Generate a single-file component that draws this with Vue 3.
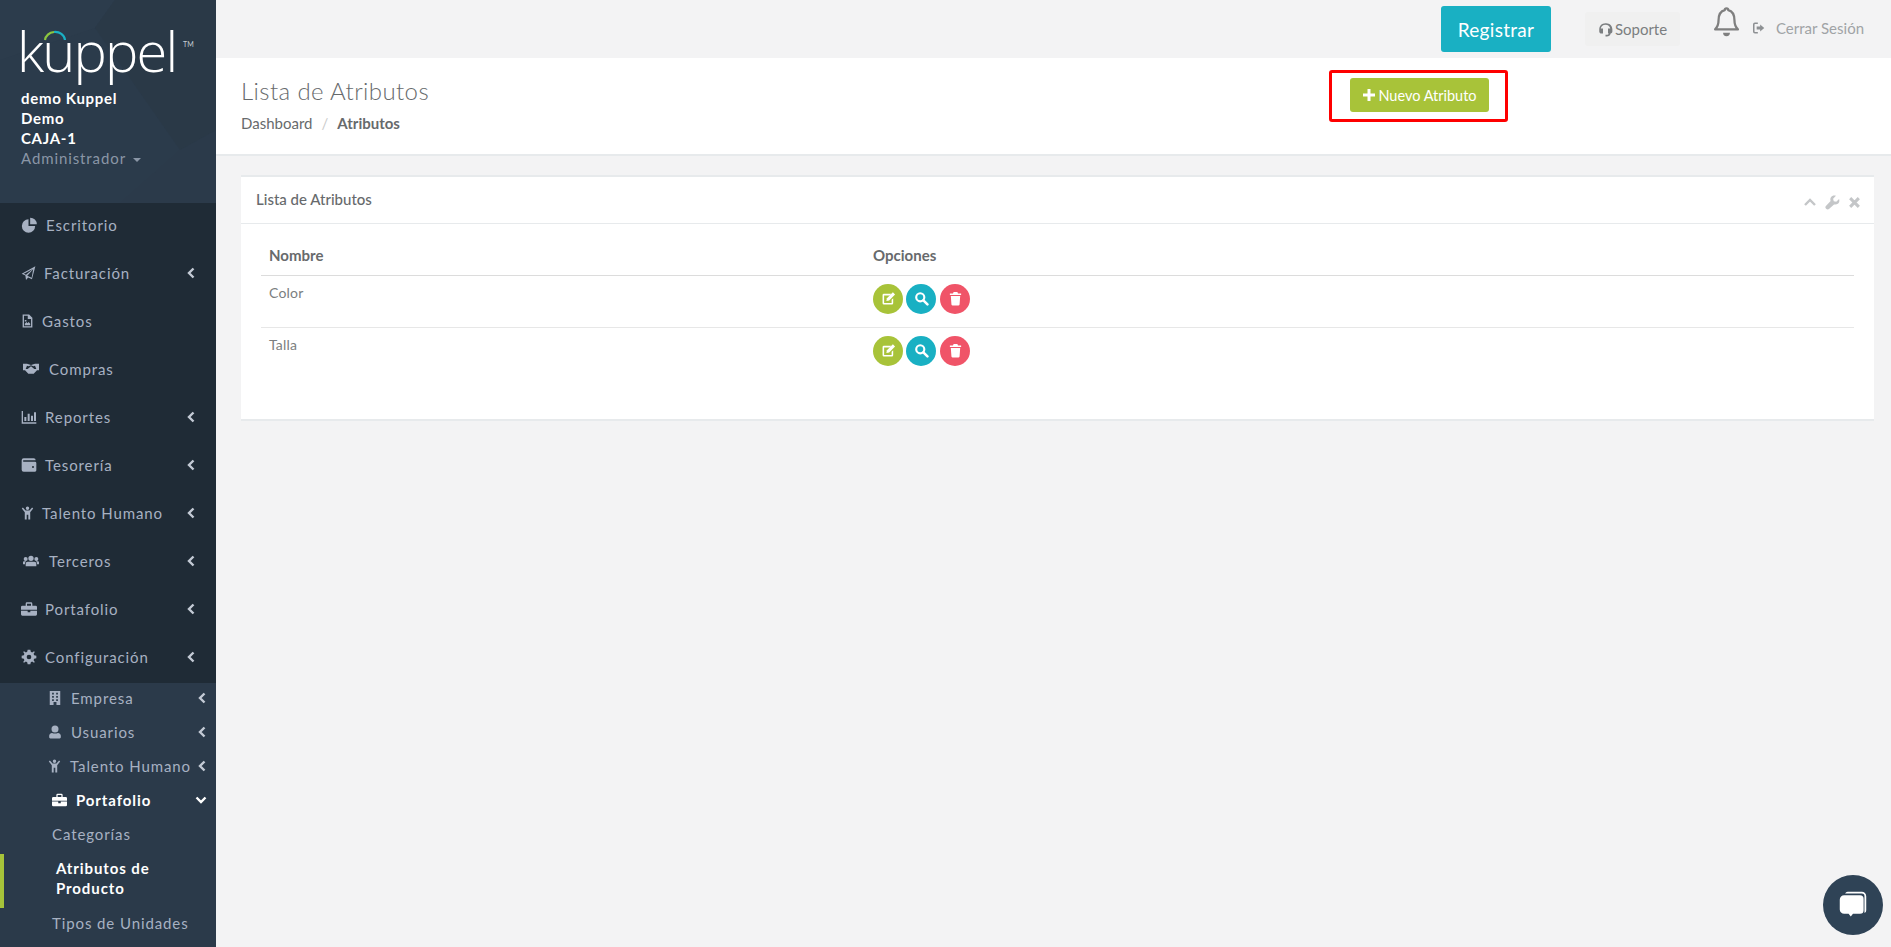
<template>
  <div class="app-shell">
    <aside class="sidebar">
      <div class="profile">
        <svg class="profile-bg" viewBox="0 0 216 203" preserveAspectRatio="none">
          <polygon points="0,0 115,0 95,28 60,75 0,60" fill="#2c3c4c" />
          <polygon points="115,0 216,0 216,130 180,150 95,28" fill="#2a3947" />
          <polygon points="0,60 95,28 180,150 120,203 0,203" fill="#2b3b4b" />
        </svg>
        <div class="logo">
          <svg class="logo-arc" viewBox="0 0 24 12">
            <path d="M2 10A10 9 0 0 1 11 2" fill="none" stroke="#8cc63f" stroke-width="2.2" />
            <path d="M11 2A10 9 0 0 1 22 10" fill="none" stroke="#1ab0c4" stroke-width="2.2" />
          </svg>
          <span class="logo-word">kuppel</span>
          <span class="logo-tm">TM</span>
        </div>
        <div class="profile-line">demo Kuppel</div>
        <div class="profile-line">Demo</div>
        <div class="profile-line">CAJA-1</div>
        <div class="profile-role">Administrador <i class="caret"></i></div>
      </div>

      <nav class="nav">
        <a v-for="item in mainNav" :key="item.label" class="nav-item">
          <svg class="nav-icon" viewBox="0 0 24 24" :style="{ width: item.w + 'px' }">
            <path :d="icons[item.icon]" fill="currentColor" fill-rule="evenodd" />
          </svg>
          <span class="nav-label">{{ item.label }}</span>
          <svg v-if="item.sub" class="chev" viewBox="0 0 10 12"><path d="M7.5 1.5 3 6l4.5 4.5" /></svg>
        </a>
      </nav>

      <div class="subnav">
        <a v-for="item in subNav" :key="item.label" class="sub-item" :class="{ open: item.open }" :style="{ paddingLeft: item.x + 'px' }">
          <svg class="nav-icon" viewBox="0 0 24 24" :style="{ width: item.w + 'px' }">
            <path :d="icons[item.icon]" fill="currentColor" fill-rule="evenodd" />
          </svg>
          <span class="nav-label">{{ item.label }}</span>
          <svg v-if="item.open" class="chev open-chev" viewBox="0 0 12 10"><path d="M1.5 2.5 6 7l4.5-4.5" /></svg>
          <svg v-else class="chev" viewBox="0 0 10 12"><path d="M7.5 1.5 3 6l4.5 4.5" /></svg>
        </a>
        <a class="leaf">Categorías</a>
        <a class="leaf active">Atributos de<br />Producto</a>
        <a class="leaf">Tipos de Unidades</a>
      </div>
    </aside>

    <div class="main">
      <header class="topbar">
        <button class="btn-register">Registrar</button>
        <a class="support">
          <svg viewBox="0 0 24 24" class="support-icon">
            <path d="M12 2C6 2 2 6.500 2 12v3c0 2 1.500 3.500 3.500 3.500H8v-8H4.500C5 7 8 4.500 12 4.500S19 7 19.500 10.500H16v8h1.500c-.5 1.500-2 2-3.500 2h-2V23h2c3 0 6-1.500 6.200-4.600 1.700-.4 2.800-1.700 2.800-3.400v-3c0-5.500-4-10-10-10z" fill="currentColor" />
          </svg>
          Soporte
        </a>
        <svg class="bell" viewBox="1 2.500 22 26">
          <path d="M12 3.500a1.500 1.500 0 0 1 1.500 1.500C18 6 19 9.500 19 14c0 4 1 6 3 8H2c2-2 3-4 3-8 0-4.500 1-8 5.500-9A1.500 1.500 0 0 1 12 3.500z" fill="none" stroke="currentColor" stroke-width="2" stroke-linejoin="round" />
          <path d="M9 25h6a3 3 0 0 1-6 0z" fill="currentColor" />
        </svg>
        <a class="logout">
          <svg viewBox="0 0 24 24" class="logout-icon">
            <path d="M10 4H5a2 2 0 0 0-2 2v12a2 2 0 0 0 2 2h5" fill="none" stroke="currentColor" stroke-width="2.600" />
            <path d="M14 6l7 6-7 6v-3.500H8v-5h6z" fill="currentColor" />
          </svg>
          Cerrar Sesión
        </a>
      </header>

      <section class="page-heading">
        <div class="heading-left">
          <h2>Lista de Atributos</h2>
          <div class="breadcrumb">
            <span>Dashboard</span>
            <span class="sep">/</span>
            <strong>Atributos</strong>
          </div>
        </div>
        <div class="highlight">
          <button class="btn-new">
            <svg viewBox="0 0 14 14" class="plus"><path d="M5.500 1h3v4.500H13v3H8.500V13h-3V8.500H1v-3h4.500z" fill="currentColor" /></svg>
            Nuevo Atributo
          </button>
        </div>
      </section>

      <section class="content">
        <div class="card">
          <div class="card-title">
            <h5>Lista de Atributos</h5>
            <div class="card-tools">
              <svg viewBox="0 0 14 10" class="tool-up"><path d="M2 8l5-5 5 5" fill="none" stroke="currentColor" stroke-width="2.400" /></svg>
              <svg viewBox="0 0 24 24" class="tool-wrench"><path d="M22.500 6.500l-4.500 4.300-4-1-1-4L17.500 1.200C14.500.2 11 1 9.500 3.500 8.300 5.500 8.200 7.800 9 9.500L1.800 17a3.400 3.400 0 0 0 5 5L14.500 15c2 .7 4.300.5 6-.9 2.300-1.700 3-4.700 2-7.600z" fill="currentColor" /></svg>
              <svg viewBox="0 0 12 12" class="tool-x"><path d="M2 2l8 8M10 2l-8 8" fill="none" stroke="currentColor" stroke-width="2.800" /></svg>
            </div>
          </div>
          <div class="card-body">
            <table>
              <thead>
                <tr><th class="col-name">Nombre</th><th>Opciones</th></tr>
              </thead>
              <tbody>
                <tr v-for="row in rows" :key="row">
                  <td class="name-cell">{{ row }}</td>
                  <td>
                    <div class="actions">
                      <button class="circle green">
                        <svg viewBox="0 0 24 24"><path d="M17 14v5H5V7h9l2.500-2.500H4.500A2 2 0 0 0 2.500 6.500v13a2 2 0 0 0 2 2h13a2 2 0 0 0 2-2v-8z" fill="currentColor" /><path d="M9.500 11.500 19 2l3.500 3.500L13 15l-4.500 1z" fill="currentColor" /></svg>
                      </button>
                      <button class="circle teal">
                        <svg viewBox="0 0 24 24"><circle cx="10" cy="10" r="6.500" fill="none" stroke="currentColor" stroke-width="3.400" /><path d="M15 15l6.500 6.500" stroke="currentColor" stroke-width="4" stroke-linecap="round" /></svg>
                      </button>
                      <button class="circle red">
                        <svg viewBox="0 0 24 24"><path d="M9 1.500h6L16 4h5v2.500H3V4h5z M4.500 8h15l-1 13.500a2 2 0 0 1-2 1.500h-9a2 2 0 0 1-2-1.500z" fill="currentColor" /></svg>
                      </button>
                    </div>
                  </td>
                </tr>
              </tbody>
            </table>
          </div>
        </div>
      </section>
    </div>

    <button class="chat">
      <svg viewBox="0 0 34 34">
        <path d="M11 2h16a5 5 0 0 1 5 5v16a3 3 0 0 1-2 3V7a3 3 0 0 0-3-3H8a4 4 0 0 1 3-2z" fill="#fff" />
        <path d="M7 6h18a4 4 0 0 1 4 4v13a4 4 0 0 1-4 4h-8l-2.500 3L12 27H7a5 5 0 0 1-5-5V11a5 5 0 0 1 5-5z" fill="#fff" />
      </svg>
    </button>
  </div>
</template>

<script setup>
const icons = {
  pie: 'M10.500 3.500a10 10 0 1 0 10 10h-10z M13 1v10h10A10 10 0 0 0 13 1z',
  plane: 'M23 1 1 13l6 3 1 7 3.500-4 6 3z M19 5.500 4.500 13l3.500 1.800z M19.500 6 10 16.500l7 3z',
  file: 'M3 0h12l6 6v18H3z M5.500 2.500v19h13V8.500h-6v-6z M7 17l3-3 2 2 2-2 3 3v3H7z M7 10h3v3H7z',
  hands: 'M0 4h6l6 2 6-2h6v10h-3l-5 5H8l-5-5H0z M6 7l-2 5h3l5-4 5 4h3l-2-5-2.500 1L12 6.500 8.500 8z',
  chart: 'M1 3h2v17h20v2H1z M5 12h3v6H5z M10 7h3v11h-3z M15 10h3v8h-3z M19.500 5h3v13h-3z',
  wallet: 'M4 2h15a3 3 0 0 1 3 3H4a1 1 0 0 0 0 2h17a2 2 0 0 1 2 2v11a2 2 0 0 1-2 2H4a3 3 0 0 1-3-3V5a3 3 0 0 1 3-3z M18 13.500a1.500 1.500 0 1 0 0 3 1.500 1.500 0 0 0 0-3z',
  talent: 'M12 0a3.200 3.200 0 1 1 0 6.400A3.200 3.200 0 0 1 12 0z M3.500 2l5 5.500h7l5-5.500 2 1.500L17 10.500V24h-3.500v-9h-3v9H7V10.500L1.500 3.500z',
  users: 'M12 4a4 4 0 1 1 0 8 4 4 0 0 1 0-8z M4 6a3 3 0 1 1 0 6 3 3 0 0 1 0-6z M20 6a3 3 0 1 1 0 6 3 3 0 0 1 0-6z M7 13h10a3 3 0 0 1 3 3v4H4v-4a3 3 0 0 1 3-3z M0 14c0-1 1-1.500 2-1.500h2.500C3.500 13.500 3 15 3 16v1H0z M21 17v-1c0-1-.5-2.500-1.500-3.500H22c1 0 2 .5 2 1.500v3z',
  brief: 'M9 2h6a2 2 0 0 1 2 2v3h5a2 2 0 0 1 2 2v4H0V9a2 2 0 0 1 2-2h5V4a2 2 0 0 1 2-2z M9 4v3h6V4z M0 14.500h10V17h4v-2.500h10V20a2 2 0 0 1-2 2H2a2 2 0 0 1-2-2z',
  cog: 'M10 1H14L14.700 4.300 16.700 5.100 19.500 3.300 20.700 4.500 18.900 7.300 19.700 9.300 23 10V14L19.700 14.700 18.900 16.700 20.700 19.500 19.500 20.700 16.700 18.900 14.700 19.700 14 23H10L9.300 19.700 7.300 18.900 4.500 20.700 3.300 19.500 5.100 16.700 4.300 14.700 1 14V10L4.300 9.300 5.100 7.300 3.300 4.500 4.500 3.300 7.300 5.100 9.300 4.300z M12 8.500a3.500 3.500 0 1 0 0 7 3.500 3.500 0 0 0 0-7z',
  building: 'M3 0h18v24h-6.500v-5h-5v5H3z M7 3v3h3V3z M14 3v3h3V3z M7 8.500v3h3v-3z M14 8.500v3h3v-3z M7 14v3h3v-3z M14 14v3h3v-3z',
  user: 'M12 1a6 6 0 1 1 0 12 6 6 0 0 1 0-12z M7 13.500c3 1.500 7 1.500 10 0 3 0 5 2.500 5 5V21a2 2 0 0 1-2 2H4a2 2 0 0 1-2-2v-2.500c0-2.500 2-5 5-5z'
}

const mainNav = [
  { label: 'Escritorio', icon: 'pie', w: 17 },
  { label: 'Facturación', icon: 'plane', w: 15, sub: true },
  { label: 'Gastos', icon: 'file', w: 13 },
  { label: 'Compras', icon: 'hands', w: 20 },
  { label: 'Reportes', icon: 'chart', w: 16, sub: true },
  { label: 'Tesorería', icon: 'wallet', w: 16, sub: true },
  { label: 'Talento Humano', icon: 'talent', w: 13, sub: true },
  { label: 'Terceros', icon: 'users', w: 20, sub: true },
  { label: 'Portafolio', icon: 'brief', w: 16, sub: true },
  { label: 'Configuración', icon: 'cog', w: 16, sub: true }
]

const subNav = [
  { label: 'Empresa', icon: 'building', w: 14, x: 48 },
  { label: 'Usuarios', icon: 'user', w: 14, x: 48 },
  { label: 'Talento Humano', icon: 'talent', w: 13, x: 48 },
  { label: 'Portafolio', icon: 'brief', w: 15, x: 52, open: true }
]

const rows = ['Color', 'Talla']
</script>

<style>
html,
body {
  margin: 0;
  background: #f3f3f4;
}
</style>

<style scoped>
.app-shell {
  display: flex;
  height: 947px;
  overflow: hidden;
  font-family: Lato, "Noto Sans", sans-serif;
  color: #676a6c;
}

button {
  border: none;
  font-family: inherit;
  cursor: pointer;
}

.sidebar {
  width: 216px;
  flex-shrink: 0;
  background: #2b3a4a;
  overflow: hidden;
  font-size: 15px;
  letter-spacing: 0.9px;
  color: #a7b1c2;
}

.profile {
  position: relative;
  height: 203px;
  box-sizing: border-box;
  padding: 88px 0 0 21px;
  background: #2b3a4a;
}

.profile-bg {
  position: absolute;
  inset: 0;
  width: 100%;
  height: 100%;
}

.logo {
  position: absolute;
  left: 17px;
  top: 14px;
  height: 72px;
  width: 182px;
  color: #fff;
}

.logo-word {
  position: absolute;
  left: 0;
  top: 0;
  font-family: "Open Sans", sans-serif;
  font-weight: 300;
  font-size: 56px;
  line-height: 72px;
  letter-spacing: -1.8px;
}

.logo-arc {
  position: absolute;
  left: 26px;
  top: 16px;
  width: 24px;
  height: 12px;
}

.logo-tm {
  position: absolute;
  left: 166px;
  top: 26px;
  font-size: 7px;
  letter-spacing: 0;
  color: #c5ccd3;
}

.profile-line {
  position: relative;
  color: #fff;
  font-weight: 700;
  font-size: 15px;
  line-height: 20px;
  letter-spacing: 0.7px;
}

.profile-role {
  position: relative;
  line-height: 20px;
  color: #8a96a6;
  letter-spacing: 0.9px;
}

.caret {
  display: inline-block;
  margin-left: 3px;
  vertical-align: 2px;
  border-top: 4px solid #8a96a6;
  border-left: 4px solid transparent;
  border-right: 4px solid transparent;
}

.nav {
  background: #1f2b36;
}

.nav-item {
  display: flex;
  align-items: center;
  gap: 8px;
  height: 48px;
  box-sizing: border-box;
  padding: 0 20px 4px 21px;
}

.nav-icon {
  flex-shrink: 0;
  height: 16px;
}

.nav-label {
  white-space: nowrap;
}

.chev {
  flex-shrink: 0;
  margin-left: auto;
  width: 10px;
  height: 12px;
  color: #c3cad5;
}

.chev path {
  fill: none;
  stroke: currentColor;
  stroke-width: 2.4;
}

.sub-item {
  display: flex;
  align-items: center;
  gap: 9px;
  height: 34px;
  padding-right: 9px;
  box-sizing: border-box;
  padding-bottom: 4px;
}

.sub-item .nav-label {
  margin-right: -8px;
}

.sub-item.open {
  color: #fff;
  font-weight: 700;
}

.open-chev {
  width: 12px;
  height: 10px;
  color: #fff;
}

.leaf {
  display: block;
  padding: 5px 0 9px 52px;
  line-height: 20px;
}

.leaf.active {
  color: #fff;
  font-weight: 700;
  box-sizing: border-box;
  height: 54px;
  margin: 1px 0 0;
  border-left: 4px solid #a6c33a;
  padding: 4px 0 10px 52px;
}

.main {
  flex: 1;
  min-width: 0;
  display: flex;
  flex-direction: column;
}

.topbar {
  height: 58px;
  flex-shrink: 0;
  box-sizing: border-box;
  display: flex;
  align-items: center;
  padding-left: 1225px;
}

.btn-register {
  width: 110px;
  height: 46px;
  background: #19b0c3;
  color: #fff;
  font-size: 19px;
  border-radius: 3px;
  letter-spacing: 0.3px;
}

.support {
  display: flex;
  align-items: center;
  justify-content: center;
  gap: 2px;
  margin-left: 34px;
  width: 95px;
  height: 34px;
  background: #f0f0f0;
  border-radius: 3px;
  font-size: 15px;
  color: #7b7e80;
}

.support-icon {
  width: 15px;
  height: 15px;
}

.bell {
  width: 25px;
  height: 30px;
  margin: 0 0 14px 34px;
  color: #7f7f7f;
}

.logout {
  display: flex;
  align-items: center;
  gap: 10px;
  margin: -2px 0 0 13px;
  font-size: 15px;
  color: #a0a3a6;
  white-space: nowrap;
}

.logout-icon {
  width: 14px;
  height: 14px;
  color: #8d9093;
}

.page-heading {
  display: flex;
  height: 98px;
  flex-shrink: 0;
  box-sizing: border-box;
  background: #fff;
  border-bottom: 2px solid #e7eaec;
  padding: 12px 0 0 25px;
}

.heading-left {
  width: 1088px;
  flex-shrink: 0;
}

h2 {
  margin: 6px 0 0;
  font-size: 24px;
  line-height: 29px;
  font-weight: 300;
  letter-spacing: 0.4px;
  color: #676a6c;
}

.breadcrumb {
  display: flex;
  align-items: center;
  font-size: 15px;
  line-height: 20px;
  margin-top: 8px;
  color: #676a6c;
}

.sep {
  margin: 0 9px;
  color: #ccc;
}

.highlight {
  box-sizing: border-box;
  width: 179px;
  height: 52px;
  border: 3px solid #fe0000;
  border-radius: 3px;
  padding: 5px 0 0 18px;
}

.btn-new {
  display: flex;
  align-items: center;
  justify-content: center;
  gap: 2px;
  width: 139px;
  height: 34px;
  background: #a8c339;
  color: #fff;
  font-size: 14.5px;
  border-radius: 3px;
  padding: 0;
}

.plus {
  width: 14px;
  height: 14px;
}

.content {
  padding: 19px 17px 0 25px;
}

.card {
  background: #fff;
  border-top: 2px solid #e7eaec;
  border-bottom: 2px solid #e7eaec;
  height: 246px;
  box-sizing: border-box;
}

.card-title {
  display: flex;
  align-items: center;
  height: 47px;
  box-sizing: border-box;
  border-bottom: 1px solid #e7eaec;
  padding: 0 13px 3px 15px;
}

h5 {
  margin: 0;
  font-size: 15px;
  font-weight: 500;
  color: #676a6c;
}

.card-tools {
  margin-left: auto;
  display: flex;
  align-items: center;
  gap: 8px;
  color: #c4c6c8;
  padding-top: 7px;
}

.tool-up {
  width: 14px;
  height: 10px;
}

.tool-wrench {
  width: 15px;
  height: 15px;
}

.tool-x {
  width: 13px;
  height: 13px;
}

.card-body {
  padding: 13px 20px 0 20px;
}

table {
  width: 100%;
  border-collapse: collapse;
  font-size: 14px;
}

th {
  text-align: left;
  font-weight: 700;
  font-size: 15px;
  height: 38px;
  padding: 0 8px 2px;
  border-bottom: 1px solid #dcdcdc;
  box-sizing: border-box;
}

.col-name {
  width: 604px;
}

td {
  vertical-align: top;
  padding: 8px;
  height: 52px;
  box-sizing: border-box;
  border-top: 1px solid #e7e7e7;
  color: #7b7e80;
}

.name-cell {
  line-height: 18px;
  letter-spacing: 0.2px;
}

.actions {
  display: flex;
  gap: 3px;
}

.circle {
  width: 30px;
  height: 30px;
  border-radius: 50%;
  padding: 0;
  display: flex;
  align-items: center;
  justify-content: center;
  color: #fff;
}

.circle svg {
  width: 15px;
  height: 15px;
}

.green {
  background: #a8c339;
}

.teal {
  background: #19b0c3;
}

.red {
  background: #f05468;
  margin-left: 1px;
}

.chat {
  position: fixed;
  left: 1823px;
  top: 875px;
  width: 60px;
  height: 60px;
  border-radius: 50%;
  background: #2f4356;
  padding: 15px;
  display: flex;
}

.chat svg {
  width: 30px;
  height: 30px;
}
</style>
